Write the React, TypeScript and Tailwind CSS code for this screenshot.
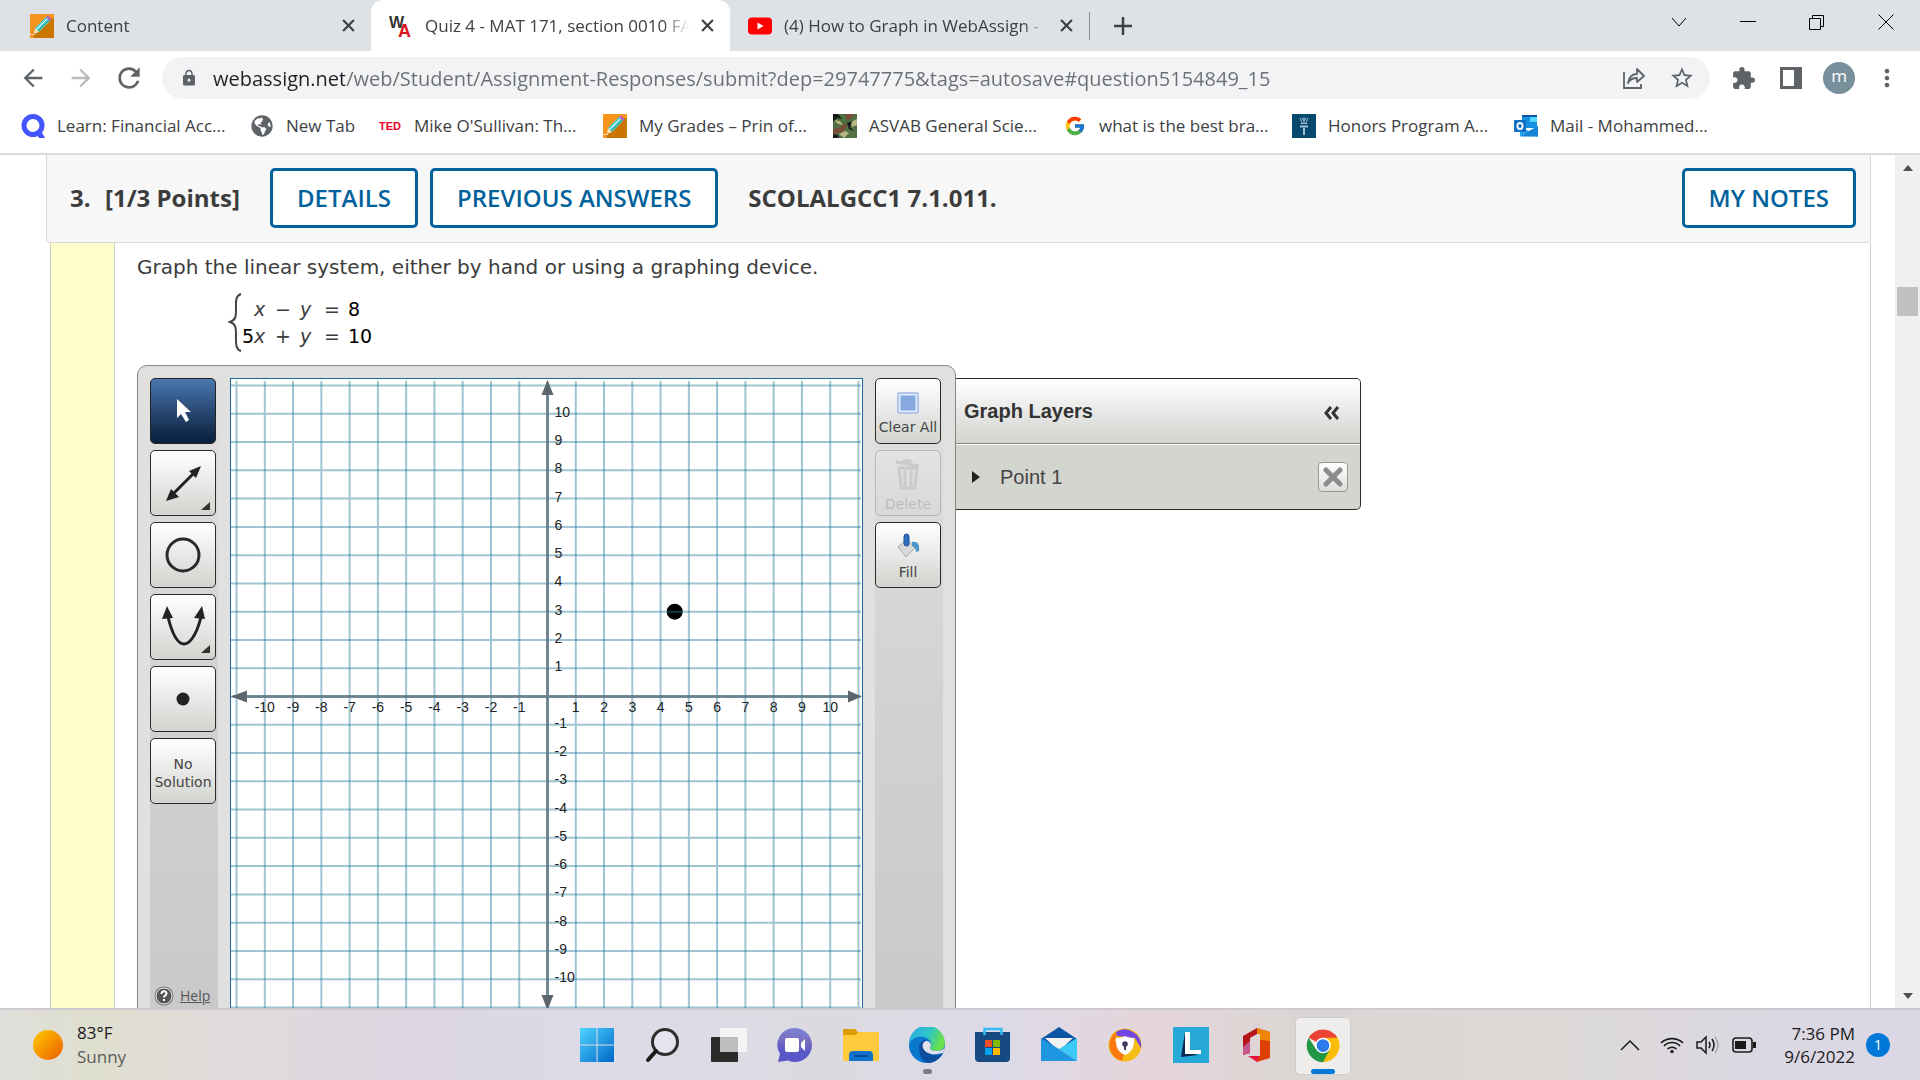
import type { ReactNode } from "react";
import clsx from "clsx";
import {
  MdArrowBack,
  MdArrowForward,
  MdExtension,
  MdLock,
  MdMoreVert,
  MdRefresh,
  MdStarBorder,
} from "react-icons/md";
import { FaGlobeAmericas } from "react-icons/fa";
import { FcGoogle } from "react-icons/fc";

const UI_FONT = "font-['Open_Sans','Noto_Sans',sans-serif]";

/* ---------- small drawings ---------- */

function PencilIcon() {
  return (
    <svg viewBox="0 0 24 24" className="size-6 shrink-0">
      <rect width="24" height="24" fill="#f7941d" />
      <path d="M24 5v19H4l-1-4L18 3z" fill="#c97500" />
      <path d="M5 14 16 3l4 4L9 18z" fill="#4fd0d8" />
      <path d="M6.500 15.500 17.500 4.500" stroke="#fff" strokeWidth="1" />
      <path d="M8 17 19 6" stroke="#2e9e6b" strokeWidth="1" />
      <path d="M16 3l2-1.500L21.500 5 20 7z" fill="#b565c9" />
      <path d="M5 14l4 4-5 2z" fill="#f3e3c2" />
      <path d="M0 20.500h5" stroke="#f3d9a5" strokeWidth="1" />
    </svg>
  );
}

function WebAssignIcon() {
  return (
    <svg viewBox="0 0 24 24" className="size-6 shrink-0 overflow-visible">
      <text x="0" y="14" fontSize="16" fontWeight="700" fontFamily="Liberation Sans, sans-serif" fill="#333">W</text>
      <text x="9" y="23" fontSize="18" fontWeight="700" fontFamily="Liberation Sans, sans-serif" fill="#d8141e">A</text>
    </svg>
  );
}

function YoutubeIcon() {
  return (
    <svg viewBox="0 0 24 24" className="size-6 shrink-0">
      <rect y="3.500" width="24" height="17" rx="4" fill="#f00" />
      <path d="M9.500 8.500v7l6-3.500z" fill="#fff" />
    </svg>
  );
}

function QuizletIcon() {
  return (
    <svg viewBox="0 0 24 24" className="size-6">
      <circle cx="12" cy="11.500" r="9" fill="none" stroke="#4255ff" strokeWidth="5" />
      <path d="M14 17h6l4 7h-6z" fill="#4255ff" />
    </svg>
  );
}

function CamoIcon() {
  return (
    <svg viewBox="0 0 24 24" className="size-6">
      <rect width="24" height="24" fill="#4e7044" />
      <path d="M12 0h9l-3 5-4 1zM0 15l8-2 4-4 2 4-5 5-9 2z" fill="#7a4b36" />
      <path d="M1 6l6 1 3 4-5-1zM18 8l6-3v6l-5 2zM6 20l6-3 4 2-5 5z" fill="#b9b67f" />
      <path d="M0 0h5l4 5-5-1-4 4zM14 9l5-2-2 6 4 4-5-2zM0 20l5 1 1 3H0z" fill="#17191a" />
    </svg>
  );
}

function TorchIcon() {
  return (
    <svg viewBox="0 0 24 24" className="size-6">
      <rect width="24" height="24" fill="#054a6e" />
      <path d="M8 11.500h8v2H8zM11 14h2v7h-2z" fill="#9fc0d3" />
      <path d="M8 4l2 5M12 3v6M16 4l-2 5M10 4l2 3 2-3M9 9.500h6" stroke="#9fc0d3" strokeWidth="1" fill="none" />
    </svg>
  );
}

function OutlookIcon() {
  return (
    <svg viewBox="0 0 24 24" className="size-6">
      <rect x="8" y="1" width="15" height="13" fill="#1490df" />
      <path d="M8 1h15v2H8z" fill="#0a55a5" />
      <path d="M16 3h7v5h-7z" fill="#50d9ff" />
      <path d="M6 22V13l9 4 9-5v10.500z" fill="#28a8ea" />
      <path d="M6 22.500 24 12v10.500z" fill="#1784d9" />
      <rect y="6" width="12" height="12" rx="1" fill="#0f6fc6" />
      <ellipse cx="6" cy="12" rx="2.600" ry="3" fill="none" stroke="#fff" strokeWidth="1.800" />
    </svg>
  );
}

/* ---------- browser chrome ---------- */

const tabs = [
  { title: "Content", icon: <PencilIcon />, active: false },
  { title: "Quiz 4 - MAT 171, section 0010 FA", icon: <WebAssignIcon />, active: true },
  { title: "(4) How to Graph in WebAssign -", icon: <YoutubeIcon />, active: false },
];

function Cross({ className }: { className?: string }) {
  return (
    <svg viewBox="0 0 12 12" className={className}>
      <path d="M1 1l10 10M11 1 1 11" stroke="currentColor" strokeWidth="2" />
    </svg>
  );
}

function TabStrip() {
  return (
    <div className="flex h-[51px] shrink-0 bg-[#dee1e6] pl-3 text-[#3c4043]">
      <div role="tablist" className="flex">
        {tabs.map((tab) => (
          <div
            key={tab.title}
            role="tab"
            aria-selected={tab.active}
            className={clsx("flex w-[359px] items-center pr-3 pl-[18px]", tab.active && "rounded-t-xl bg-white")}
          >
            {tab.icon}
            <span className="ml-3 flex-1 overflow-hidden text-[17px] whitespace-nowrap mask-r-from-90%">{tab.title}</span>
            <button aria-label={`Close ${tab.title}`} className="ml-2 p-1">
              <Cross className="size-[13px]" />
            </button>
          </div>
        ))}
      </div>
      <div className="mt-3 h-7 w-px bg-[#8b8e93]" />
      <button aria-label="New tab" className="ml-5 px-1">
        <svg viewBox="0 0 18 18" className="size-[18px]">
          <path d="M9 0v18M0 9h18" stroke="currentColor" strokeWidth="2.500" />
        </svg>
      </button>
      <div className="ml-auto flex h-11 text-black">
        <button aria-label="Search tabs" className="flex w-[69px] items-center justify-center">
          <svg viewBox="0 0 16 16" className="size-4"><path d="M1 4l7 8 7-8" fill="none" stroke="currentColor" /></svg>
        </button>
        <button aria-label="Minimize" className="flex w-[69px] items-center justify-center">
          <svg viewBox="0 0 16 16" className="size-4"><path d="M0 7.500h16" stroke="currentColor" /></svg>
        </button>
        <button aria-label="Restore" className="flex w-[69px] items-center justify-center">
          <svg viewBox="0 0 16 16" className="size-4">
            <path d="M.5 4.500h11v11H.5zM3.500 4.500v-3h11v11h-3" fill="none" stroke="currentColor" />
          </svg>
        </button>
        <button aria-label="Close window" className="flex w-[69px] items-center justify-center">
          <svg viewBox="0 0 16 16" className="size-4"><path d="M.5.5l15 15M15.500.5l-15 15" stroke="currentColor" /></svg>
        </button>
      </div>
    </div>
  );
}

function AddressBar() {
  return (
    <div className="flex h-[54px] shrink-0 items-center bg-white pr-[9px] pl-[9px] text-[#5f6368]">
      <button aria-label="Back" className="flex w-12 justify-center"><MdArrowBack className="size-7" /></button>
      <button aria-label="Forward" className="flex w-12 justify-center text-[#b8babd]"><MdArrowForward className="size-7" /></button>
      <button aria-label="Reload" className="flex w-12 justify-center"><MdRefresh className="size-8" /></button>
      <div className="ml-[9px] flex h-[42px] flex-1 items-center rounded-full bg-[#f1f3f4] pr-4 pl-[18px]">
        <MdLock className="size-[18px] shrink-0" />
        <input
          aria-label="Address"
          defaultValue="webassign.net/web/Student/Assignment-Responses/submit?dep=29747775&tags=autosave#question5154849_15"
          className="ml-[15px] h-full min-w-0 flex-1 bg-[linear-gradient(90deg,#202124_132px,#6b6e72_132px)] bg-clip-text text-xl text-transparent outline-none"
        />
        <button aria-label="Share" className="flex w-12 justify-center">
          <svg viewBox="0 0 24 24" className="size-6" fill="none" stroke="currentColor" strokeWidth="1.800">
            <path d="M2 6v16h17v-4" />
            <path d="M6 17c1-6 4-9 9-9V3l7 7-7 6v-4c-4 0-7 1-9 5z" strokeLinejoin="round" />
          </svg>
        </button>
        <button aria-label="Bookmark" className="-mr-3 flex w-12 justify-center"><MdStarBorder className="size-[26px]" /></button>
      </div>
      <button aria-label="Extensions" className="ml-[9px] flex w-12 justify-center"><MdExtension className="size-[25px]" /></button>
      <button aria-label="Side panel" className="flex w-12 justify-center">
        <svg viewBox="0 0 22 22" className="size-[22px]">
          <path d="M1.500 1.500h19v19h-19z" fill="none" stroke="currentColor" strokeWidth="3" />
          <path d="M14 1h7v20h-7z" fill="currentColor" />
        </svg>
      </button>
      <button aria-label="Profile" className="mx-2 flex size-8 items-center justify-center rounded-full bg-[#78909c] pb-1 text-[17px] text-white">
        m
      </button>
      <button aria-label="Menu" className="flex w-12 justify-center"><MdMoreVert className="size-7" /></button>
    </div>
  );
}

const bookmarks = [
  { label: "Learn: Financial Acc...", width: "w-[229px]", icon: <QuizletIcon /> },
  { label: "New Tab", width: "w-[128px]", icon: <FaGlobeAmericas className="size-[22px] text-[#5f6368]" /> },
  {
    label: "Mike O'Sullivan: Th...",
    width: "w-[225px]",
    icon: <span className="font-['Liberation_Sans',sans-serif] text-[11px] font-bold text-[#eb0028]">TED</span>,
  },
  { label: "My Grades – Prin of...", width: "w-[230px]", icon: <PencilIcon /> },
  { label: "ASVAB General Scie...", width: "w-[230px]", icon: <CamoIcon /> },
  { label: "what is the best bra...", width: "w-[229px]", icon: <FcGoogle className="size-[22px]" /> },
  { label: "Honors Program A...", width: "w-[222px]", icon: <TorchIcon /> },
  { label: "Mail - Mohammed...", width: "w-[222px]", icon: <OutlookIcon /> },
];

function BookmarksBar() {
  return (
    <nav className="flex h-[50px] shrink-0 items-center border-b-2 border-[#dadada] bg-white pb-1.5 pl-[21px] text-[17px] text-[#3c4043]">
      {bookmarks.map((b) => (
        <a key={b.label} href="#" className={clsx("flex shrink-0 items-center gap-3 whitespace-nowrap", b.width)}>
          <span className="flex w-6 shrink-0 justify-center">{b.icon}</span>
          {b.label}
        </a>
      ))}
    </nav>
  );
}

/* ---------- graphing tool ---------- */

const UNIT = 28.27;
const CX = 316.5;
const CY = 317.5;
const units = Array.from({ length: 23 }, (_, i) => i - 11);
const labelled = units.filter((n) => n !== 0 && Math.abs(n) <= 10);

function Graph() {
  return (
    <div className="h-[634px] w-[633px] border border-[#1f66a5] bg-white">
      <svg viewBox="0 0 631 632" className="h-full w-full" role="img" aria-label="Coordinate plane">
        <circle cx={CX + 4.5 * UNIT} cy={CY - 3 * UNIT} r="8" fill="#000" />
        <g stroke="#2a7c9e" strokeOpacity="0.45" strokeWidth="2">
          {units.map((n) => (
            <path key={n} d={`M${CX + n * UNIT} 2V632M0 ${CY + n * UNIT}H630`} />
          ))}
        </g>
        <path d={`M${CX} 4V628M2 ${CY}H628`} stroke="#5b7480" strokeOpacity="0.8" strokeWidth="3" />
        <g fill="#5b676c">
          <path d={`M${CX} 1l6 15h-12zM${CX} 631l6-15h-12z`} />
          <path d={`M0 ${CY}l16-6v12zM631 ${CY}l-14-6v12z`} />
        </g>
        <g fontFamily="Liberation Sans, sans-serif" fontSize="14" fill="#222">
          {labelled.map((n) => (
            <g key={n}>
              <text x={CX + n * UNIT} y={CY + 15} textAnchor="middle">{n}</text>
              <text x={CX + 7} y={CY - n * UNIT + 3}>{n}</text>
            </g>
          ))}
        </g>
      </svg>
    </div>
  );
}

function ToolButton({ label, active, disabled, children }: { label: string; active?: boolean; disabled?: boolean; children: ReactNode }) {
  return (
    <button
      aria-label={label}
      disabled={disabled}
      className={clsx(
        "flex size-[66px] shrink-0 flex-col items-center justify-center rounded-[5px] border bg-linear-to-b font-['DejaVu_Sans',sans-serif] text-sm leading-[18px]",
        active ? "border-[#222] from-[#4a78b0] to-[#0a1f3c]" : "from-white to-[#d2d4cf] text-[#444]",
        !active && "border-[#2b2b2b]",
        disabled && "opacity-20",
      )}
    >
      {children}
    </button>
  );
}

function ToolColumn({ children }: { children: ReactNode }) {
  return <div className="flex w-[68px] flex-col gap-1.5 bg-linear-to-b from-[#e0e0df] via-[#d2d2d2] to-[#c9c9c9]">{children}</div>;
}

function GraphTool() {
  return (
    <div className="flex gap-3 rounded-t-[10px] border border-[#888] bg-[#e0e0de] p-3">
      <ToolColumn>
        <ToolButton label="Select" active>
          <svg viewBox="0 0 64 64" className="size-16">
            <path d="M26 20v19l4-4 5 8 3-2-4-8h6z" fill="#fff" />
          </svg>
        </ToolButton>
        <ToolButton label="Line">
          <svg viewBox="0 0 64 64" className="size-16">
            <path d="M21 44 44 21" stroke="#222" strokeWidth="3" />
            <path d="M50 15 45 27 38 20zM15 50l5-12 8 8z" fill="#222" />
            <path d="M59 51v8h-9z" fill="#333" />
          </svg>
        </ToolButton>
        <ToolButton label="Circle">
          <svg viewBox="0 0 64 64" className="size-16">
            <circle cx="32" cy="32" r="16" fill="none" stroke="#2a2a2a" strokeWidth="3" />
          </svg>
        </ToolButton>
        <ToolButton label="Parabola">
          <svg viewBox="0 0 64 64" className="size-16">
            <path d="M17 22C22 42 28 49 33 49s12-7 17-27" fill="none" stroke="#222" strokeWidth="3" />
            <path d="M16 11l6 12-11 1zM51 11l3 13-11-1z" fill="#222" />
            <path d="M59 50v8h-9z" fill="#333" />
          </svg>
        </ToolButton>
        <ToolButton label="Point">
          <svg viewBox="0 0 64 64" className="size-16">
            <circle cx="32" cy="32" r="6.500" fill="#222" />
          </svg>
        </ToolButton>
        <ToolButton label="No Solution">
          <span className="pt-1">No</span>
          <span>Solution</span>
        </ToolButton>
        <a href="#help" className="mt-auto flex items-center gap-1.5 pb-1.5 pl-1 text-sm text-[#555] underline">
          <svg viewBox="0 0 20 20" className="size-5">
            <circle cx="10" cy="10" r="9.500" fill="#777" />
            <circle cx="10" cy="10" r="8" fill="#555" stroke="#eee" />
            <path d="M7.500 8c0-3.500 5-3.500 5-.5 0 2-2.500 2-2.500 4M10 13v2" fill="none" stroke="#fff" strokeWidth="2" />
          </svg>
          Help
        </a>
      </ToolColumn>
      <Graph />
      <ToolColumn>
        <ToolButton label="Clear All">
          <svg viewBox="0 0 22 22" className="mt-1.5 mb-1 size-[22px]">
            <rect x="1" y="1" width="20" height="20" rx="1" fill="#e4ecfa" stroke="#9db8e6" strokeWidth="1.500" />
            <rect x="3.500" y="3.500" width="15" height="15" fill="#86a9e0" />
          </svg>
          <span className="whitespace-nowrap">Clear All</span>
        </ToolButton>
        <ToolButton label="Delete" disabled>
          <svg viewBox="0 0 26 32" className="mt-1.5 mb-1 size-8" fill="none" stroke="#888" strokeWidth="3">
            <path d="M1 3l23 4M9 4V2h6v3M4 9l2 20h14l2-20zM10 11v16M16 11v16" />
          </svg>
          <span>Delete</span>
        </ToolButton>
        <ToolButton label="Fill">
          <svg viewBox="0 0 26 26" className="mt-1 mb-1 size-[26px]">
            <path d="M3 14 12 6l8 9-9 9z" fill="#d7d8da" stroke="#aaa" />
            <path d="M17 9c5-1 8 2 7 9l-3 1c0-4-2-5-4-6z" fill="#4a97cc" />
            <rect x="9" y="1" width="5" height="12" rx="2.500" fill="#2d6fc0" stroke="#1f4f93" />
          </svg>
          <span>Fill</span>
        </ToolButton>
      </ToolColumn>
    </div>
  );
}

function GraphLayers() {
  return (
    <aside className="mt-[13px] w-[405px] self-start overflow-hidden rounded-r-[5px] border border-l-0 border-[#2b2b2b] bg-[#d3d5cf] font-['Liberation_Sans',sans-serif] text-[#444]">
      <div className="flex h-[65px] items-center justify-between border-b border-[#888] bg-linear-to-b from-white to-[#d2d4cf] pr-5 pl-2">
        <h2 className="text-xl font-bold text-[#333]">Graph Layers</h2>
        <button aria-label="Collapse layers" className="pt-1">
          <svg viewBox="0 0 18 16" className="size-[18px]" fill="none" stroke="#333" strokeWidth="3">
            <path d="M9 2 4 8l5 6M16 2l-5 6 5 6" />
          </svg>
        </button>
      </div>
      <div className="flex h-[65px] items-center border-t border-white pr-3 pl-4">
        <svg viewBox="0 0 8 12" className="h-3 w-2"><path d="M0 0v12l8-6z" fill="#222" /></svg>
        <span className="ml-5 text-xl">Point 1</span>
        <button
          aria-label="Remove Point 1"
          className="ml-auto flex size-[30px] items-center justify-center rounded-[4px] border border-[#999] bg-linear-to-b from-white to-[#ddd]"
        >
          <svg viewBox="0 0 20 20" className="size-5">
            <path d="M3 3l14 14M17 3 3 17" stroke="#8c8c8c" strokeWidth="5" strokeLinecap="round" />
          </svg>
        </button>
      </div>
    </aside>
  );
}

/* ---------- question ---------- */

function OutlineButton({ children, className }: { children: ReactNode; className?: string }) {
  return (
    <button className={clsx("h-[60px] rounded-[5px] border-3 border-[#00629b] bg-white px-6 text-2xl font-semibold text-[#00629b]", className)}>
      {children}
    </button>
  );
}

function Equations() {
  return (
    <div className="flex h-[60px] pl-[91px]">
      <svg viewBox="0 0 14 60" className="h-[60px] w-3.5">
        <path d="M13 2C7 4 8 10 8 17s0 11-6 13c6 2 6 6 6 13s-1 14 5 16" fill="none" stroke="#444" strokeWidth="2" />
      </svg>
      <div className="grid grid-cols-[12px_12px_34px_16px_32px_auto] content-center pt-0.5 text-[19px] leading-[27px]">
        <span />
        <i>x</i>
        <span className="text-center">−</span>
        <i>y</i>
        <span className="text-center">=</span>
        <span className="text-black">8</span>
        <span className="text-black">5</span>
        <i>x</i>
        <span className="text-center">+</span>
        <i>y</i>
        <span className="text-center">=</span>
        <span className="text-black">10</span>
      </div>
    </div>
  );
}

function Question() {
  return (
    <div className="mr-6 ml-[46px] min-w-0 flex-1">
      <header className="flex h-[88px] items-center rounded-b-[4px] border border-t-0 border-[#d6d8da] bg-[#f7f7f7] pr-3.5 pb-0.5 pl-[23px] text-2xl font-bold text-[#3c3c3c]">
        <span className="w-[35px]">3.</span>
        <span className="w-[165px]">[1/3 Points]</span>
        <OutlineButton className="mr-3">DETAILS</OutlineButton>
        <OutlineButton className="mr-[30px]">PREVIOUS ANSWERS</OutlineButton>
        <span>SCOLALGCC1 7.1.011.</span>
        <OutlineButton className="ml-auto">MY NOTES</OutlineButton>
      </header>
      <div className="ml-1 flex h-full border-x border-[#ccc]">
        <div className="w-16 shrink-0 border-r border-[#ccc] bg-[#ffffcc]" />
        <div className="flex-1 pt-2.5 pl-[22px] font-['DejaVu_Sans',sans-serif] text-[#3c3c3c]">
          <p className="text-xl leading-7">Graph the linear system, either by hand or using a graphing device.</p>
          <div className="mt-[11px]">
            <Equations />
          </div>
          <div className={clsx("mt-[13px] flex", UI_FONT)}>
            <GraphTool />
            <GraphLayers />
          </div>
        </div>
      </div>
    </div>
  );
}

function Scrollbar() {
  return (
    <div className="flex w-[25px] shrink-0 flex-col items-center bg-[#f0f0f0] pt-[10px] pb-[9px]">
      <svg viewBox="0 0 10 6" className="h-1.5 w-2.5"><path d="M0 6l5-6 5 6z" fill="#505050" /></svg>
      <div className="mt-[116px] h-[29px] w-[21px] bg-[#c1c1c1]" />
      <svg viewBox="0 0 10 6" className="mt-auto h-1.5 w-2.5"><path d="M0 0l5 6 5-6z" fill="#505050" /></svg>
    </div>
  );
}

/* ---------- taskbar ---------- */

const apps: { name: string; running?: boolean; active?: boolean; icon: ReactNode }[] = [
  {
    name: "Start",
    icon: (
      <>
        <defs>
          <linearGradient id="win" x1="0" y1="0" x2="1" y2="1">
            <stop stopColor="#4fd4ff" />
            <stop offset="1" stopColor="#0067c8" />
          </linearGradient>
        </defs>
        <path d="M1 1h16.500v16.500H1zM18.500 1H35v16.500H18.500zM1 18.500h16.500V35H1zM18.500 18.500H35V35H18.500z" fill="url(#win)" />
      </>
    ),
  },
  {
    name: "Search",
    icon: (
      <>
        <circle cx="20" cy="15" r="12.500" fill="#e6e4ee" stroke="#2e2e2e" strokeWidth="3" />
        <path d="M11 24 3 33" stroke="#1a1a1a" strokeWidth="4" strokeLinecap="round" />
      </>
    ),
  },
  {
    name: "Task View",
    icon: (
      <>
        <rect y="10" width="27" height="25" rx="1" fill="#2a2a2a" />
        <rect x="9" y="1" width="27" height="24" rx="1" fill="#f4f4f4" />
        <path d="M9 10h18v15H9z" fill="#bdbdbd" />
      </>
    ),
  },
  {
    name: "Chat",
    icon: (
      <>
        <defs>
          <linearGradient id="chat" x1="0.600" y1="0" x2="0.500" y2="1">
            <stop stopColor="#7c86da" />
            <stop offset="0.350" stopColor="#7a6fc0" />
            <stop offset="0.700" stopColor="#5a57c8" />
          </linearGradient>
        </defs>
        <path d="M18 1a17 17 0 1 1-7 32.500L1 35l2-8A17 17 0 0 1 18 1z" fill="url(#chat)" />
        <rect x="8" y="11" width="14" height="14" rx="2" fill="#fff" />
        <path d="M24 16l4-4v12l-4-4z" fill="#fff" />
      </>
    ),
  },
  {
    name: "File Explorer",
    icon: (
      <>
        <path d="M0 2h12l4 4v6H0z" fill="#dd9c00" />
        <path d="M0 8h12l4-3h20v29H0z" fill="#ffcb3d" />
        <path d="M6 34v-6q0-4 4-4h16q4 0 4 4v6z" fill="#0f73cc" />
        <path d="M11 29h14" stroke="#07489a" strokeWidth="2" />
      </>
    ),
  },
  {
    name: "Edge",
    running: true,
    icon: (
      <>
        <defs>
          <linearGradient id="edge" x1="0" y1="0" x2="1" y2="0.300">
            <stop stopColor="#2ba7e8" />
            <stop offset="0.600" stopColor="#2fc6c5" />
            <stop offset="1" stopColor="#6be04a" />
          </linearGradient>
        </defs>
        <circle cx="18" cy="18" r="18" fill="#0b78d0" />
        <path d="M0 17A18 18 0 0 1 36 16c0 5-4 8-9 8-4 0-6-1-6-3 2-2 2-7-2-9C12 7 4 10 0 17z" fill="url(#edge)" />
        <path d="M10 20c0-5 4-7 7-7-4 5 0 15 9 15 3 0 5 0 8-2-3 6-9 10-15 10-6-1-9-8-9-16z" fill="#0d4f9e" />
        <path d="M17 14c-3 1-4 4-3 7 2 5 8 7 14 6l6-1 2-6c-2 3-5 4-9 4s-6-1-6-3c2-3 1-7-4-7z" fill="#e2e0ec" />
      </>
    ),
  },
  {
    name: "Microsoft Store",
    icon: (
      <>
        <path d="M9.500 8V2h17v6" fill="none" stroke="#32bdf2" strokeWidth="2.500" />
        <path d="M0 5h35v26q0 4-4 4H4q-4 0-4-4z" fill="#174a80" />
        <path d="M9.500 8V5M26.500 8V5" stroke="#32bdf2" strokeWidth="2.500" />
        <path d="M10 13h7v7h-7z" fill="#f25022" />
        <path d="M18 13h7v7h-7z" fill="#7fba00" />
        <path d="M10 21h7v7h-7z" fill="#00a4ef" />
        <path d="M18 21h7v7h-7z" fill="#ffb900" />
      </>
    ),
  },
  {
    name: "Mail",
    icon: (
      <>
        <path d="M0 12 18 0l18 12v8H0z" fill="#0a55a5" />
        <path d="M4 11h28L18 24z" fill="#f3f3f3" />
        <path d="M36 11v23L18 22z" fill="#3cc9f5" />
        <path d="M0 11l18 11 18 12H0z" fill="#1e96e0" />
      </>
    ),
  },
  {
    name: "Secure Browser",
    icon: (
      <>
        <circle cx="18" cy="18" r="16.500" fill="#f5bd17" />
        <path d="M10 4A16.500 16.500 0 0 0 15 34l2-6-9-14z" fill="#fb7a12" />
        <path d="M9 5a16.500 16.500 0 0 1 25 16l-6-10-18-2z" fill="#7345e6" />
        <path d="M18 9c4 2 7 2 9 2 1 9-3 15-9 17-6-2-10-8-9-17 2 0 5 0 9-2z" fill="#fff" />
        <circle cx="18" cy="17" r="2.800" fill="#3b3c5c" />
        <path d="M17 18h2v5h-2z" fill="#3b3c5c" />
      </>
    ),
  },
  {
    name: "Lens",
    icon: (
      <>
        <path d="M0 0h36v36H0z" fill="#27a9d8" />
        <path d="M12 5 8 30l17-2-11-3z" fill="#0b2a52" />
        <path d="M12 5h5v18h11v4H12z" fill="#fff" />
      </>
    ),
  },
  {
    name: "Office",
    icon: (
      <>
        <path d="M4 9 18 1v6l-7 4v15l-7 2z" fill="#b5141c" />
        <path d="M4 20v8l7-2V14z" fill="#c4568f" />
        <path d="M18 1l13 4v26l-13 4v-6h3V7h-3z" fill="#dd3f04" />
        <path d="M18 1l13 4v9l-10-1V7h-3z" fill="#ee8300" />
        <path d="M9 29h12v-1l-3 7z" fill="#e3173e" />
      </>
    ),
  },
  {
    name: "Chrome",
    running: true,
    active: true,
    icon: (
      <>
        <path d="M18 18 3.300 10A17 17 0 0 1 32.700 10z" fill="#ea4335" />
        <path d="M18 18V10h15A17 17 0 0 1 18 35z" fill="#fbbc05" />
        <path d="M3.300 10 11 22l14 0-7 13A17 17 0 0 1 3.300 10z" fill="#219644" />
        <circle cx="18" cy="18" r="8" fill="#fff" />
        <circle cx="18" cy="18" r="6.500" fill="#2b7bea" />
      </>
    ),
  },
];

function Taskbar() {
  return (
    <footer className="grid h-[72px] shrink-0 grid-cols-[1fr_auto_1fr] items-center border-t-2 border-[#cdc8ce] bg-[linear-gradient(90deg,#e0dedb_0%,#dfdfcf_5%,#e0dbda_11%,#dbd6e2_22%,#dddbe8_32%,#dcdae0_43%,#dcdae8_52%,#e5d5da_60%,#dad6d3_68%,#dcd9d7_81%,#dcd8e2_91%,#dad6e4_100%)]">
      <button className="ml-[33px] flex items-center gap-3.5 text-left text-[17px] leading-6">
        <span className="size-[30px] rounded-full bg-linear-to-br from-[#fdc800] to-[#ea5b00]" />
        <span>
          <span className="block text-[#1a1a1a]">83°F</span>
          <span className="block text-[#5c5c5c]">Sunny</span>
        </span>
      </button>
      <div className="flex gap-2.5 pt-px">
        {apps.map((app) => (
          <button
            key={app.name}
            aria-label={app.name}
            className={clsx(
              "flex h-[58px] w-14 flex-col items-center rounded-[5px] pt-2.5",
              app.active && "border border-[#d0cccb] bg-[#efedec]",
            )}
          >
            <svg viewBox="0 0 36 36" className="size-9">{app.icon}</svg>
            {app.running && (
              <span className={clsx("mt-1.5 h-[5px] rounded-full", app.active ? "w-6 bg-[#0078d7]" : "w-[9px] bg-[#7d7a83]")} />
            )}
          </button>
        ))}
      </div>
      <div className="flex items-center justify-end pr-[30px] text-[#1a1a1a]">
        <button aria-label="Show hidden icons">
          <svg viewBox="0 0 20 12" className="h-3 w-5"><path d="M1 11l9-9 9 9" fill="none" stroke="currentColor" strokeWidth="1.500" /></svg>
        </button>
        <button aria-label="Network, volume and battery" className="ml-5 flex items-center gap-3">
          <svg viewBox="0 0 24 18" className="h-[18px] w-6" fill="none" stroke="currentColor" strokeWidth="1.600">
            <path d="M1 7a16 16 0 0 1 22 0M4 10a11 11 0 0 1 16 0M7.500 13a6.500 6.500 0 0 1 9 0" />
            <circle cx="12" cy="15.500" r="1.700" fill="currentColor" stroke="none" />
          </svg>
          <svg viewBox="0 0 24 20" className="h-5 w-6" fill="none" stroke="currentColor" strokeWidth="1.500">
            <path d="M1 7h4l5-5v16l-5-5H1zM13 7q2 3 0 6M16 4q4 6 0 12" />
            <path d="M19 2q6 8 0 16" stroke="#aaa6ad" />
          </svg>
          <svg viewBox="0 0 24 16" className="h-4 w-6">
            <rect x="1" y="1" width="19" height="14" rx="3" fill="none" stroke="currentColor" strokeWidth="1.600" />
            <path d="M3 4h11v8H3zM21 5h3v6h-3z" fill="currentColor" />
          </svg>
        </button>
        <button className="ml-7 text-right text-[17px] leading-[23px]">
          <span className="block">7:36 PM</span>
          <span className="block">9/6/2022</span>
        </button>
        <span className="ml-[11px] flex size-6 items-center justify-center rounded-full bg-[#0078d7] text-sm text-white">1</span>
      </div>
    </footer>
  );
}

export default function App() {
  return (
    <div className={clsx("flex h-screen flex-col overflow-hidden bg-white", UI_FONT)}>
      <TabStrip />
      <AddressBar />
      <BookmarksBar />
      <main className="flex min-h-0 flex-1 overflow-hidden">
        <Question />
        <Scrollbar />
      </main>
      <Taskbar />
    </div>
  );
}
